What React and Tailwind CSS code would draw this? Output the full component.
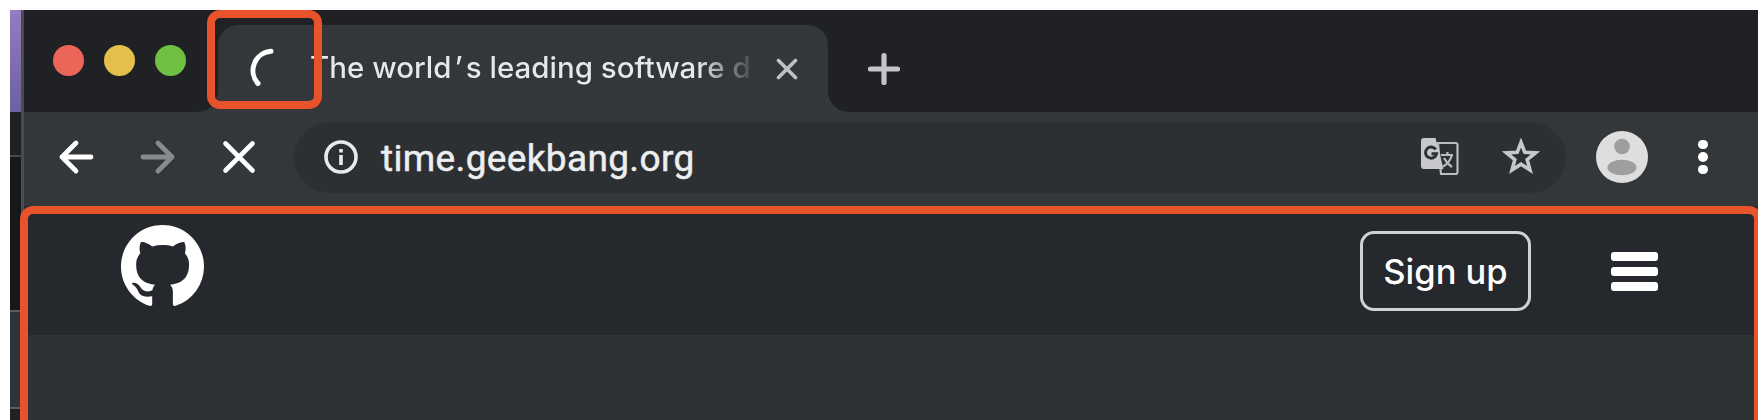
const OCTOCAT =
  "M8 0C3.58 0 0 3.58 0 8c0 3.54 2.29 6.53 5.47 7.59.4.07.55-.17.55-.38 0-.19-.01-.82-.01-1.49-2.01.37-2.53-.49-2.69-.94-.09-.23-.48-.94-.82-1.13-.28-.15-.68-.52-.01-.53.63-.01 1.08.58 1.23.82.72 1.21 1.87.87 2.33.66.07-.52.28-.87.51-1.07-1.78-.2-3.64-.89-3.64-3.95 0-.87.31-1.59.82-2.15-.08-.2-.36-1.02.08-2.12 0 0 .67-.21 2.2.82.64-.18 1.32-.27 2-.27.68 0 1.36.09 2 .27 1.53-1.04 2.2-.82 2.2-.82.44 1.1.16 1.92.08 2.12.51.56.82 1.27.82 2.15 0 3.07-1.87 3.75-3.65 3.95.29.25.54.73.54 1.48 0 1.07-.01 1.93-.01 2.2 0 .21.15.46.55.38A8.013 8.013 0 0016 8c0-4.42-3.58-8-8-8z";

function Icon({ className, box, width = 4, children }) {
  return (
    <svg
      className={className}
      viewBox={box}
      fill="none"
      stroke="currentColor"
      strokeWidth={width}
      strokeLinecap="round"
      strokeLinejoin="round"
    >
      {children}
    </svg>
  );
}

function DesktopEdge() {
  return (
    <div className="flex w-[11px] shrink-0 flex-col">
      <div className="h-[102px] bg-linear-to-b from-[#957bc1] to-[#6c61a0]" />
      <div className="h-[45px] border-b-2 border-[#4a4a4c] bg-[#1f2022]" />
      <div className="h-[155px] border-b-2 border-[#5b5e60] bg-[#171818]" />
      <div className="h-[97px] border-b-2 border-[#5b5e60] bg-[#2d3336]" />
      <div className="flex-1 bg-[#202124]" />
    </div>
  );
}

function TabStrip() {
  return (
    <div className="flex h-[102px] shrink-0 items-start bg-[#202124]">
      <div className="flex gap-5 pt-[35px] pl-[32px]">
        <div className="size-[31px] rounded-full bg-[#ec6559]" />
        <div className="size-[31px] rounded-full bg-[#e2c04b]" />
        <div className="size-[31px] rounded-full bg-[#6fc043]" />
      </div>
      <div className="mt-[82px] ml-[12px] size-5 bg-[radial-gradient(circle_at_0_0,#202124_19.5px,#33373a_20px)]" />
      <div className="mt-[15px] flex h-[87px] w-[610px] rounded-t-[20px] bg-[#33373a]">
        <Icon className="mt-[20px] ml-[25px] h-12 w-12 shrink-0 text-white" box="0 0 48 48" width={5}>
          <path d="M28 6.300A19.300 19.300 0 0 0 15 38.500" />
        </Icon>
        <div className="mt-[22px] ml-[19px] w-[450px] overflow-hidden font-[Inter,sans-serif] text-[29.5px] leading-[40px] font-medium whitespace-nowrap">
          <span className="inline-block bg-linear-to-r from-[#e6e8ea] from-88% to-[#4a4e52] bg-clip-text text-transparent">
            The world<span className="px-[3px]">’</span>s leading software d
          </span>
        </div>
        <Icon className="mt-[33px] ml-[16px] size-[22px] shrink-0 text-[#bfc1c3]" box="0 0 22 22" width={3.6}>
          <path d="M2.500 2.500 19.500 19.500M19.500 2.500 2.500 19.500" />
        </Icon>
      </div>
      <div className="mt-[82px] size-5 bg-[radial-gradient(circle_at_100%_0,#202124_19.5px,#33373a_20px)]" />
      <Icon className="mt-[42px] ml-[19px] size-[34px] text-[#c4c5c8]" box="0 0 34 34" width={5.2}>
        <path d="M17 3.500V30.500M3.500 17H30.500" />
      </Icon>
    </div>
  );
}

function Toolbar() {
  return (
    <div className="flex h-[94px] shrink-0 items-center bg-[#33373a] pb-1">
      <Icon className="ml-[37px] h-9 w-9 text-white" box="0 0 36 36" width={4.8}>
        <path d="M33 18H4M18 4 4 18 18 32" />
      </Icon>
      <Icon className="ml-[46px] h-9 w-9 text-[#888b8e]" box="0 0 36 36" width={4.8}>
        <path d="M3 18H32M18 4 32 18 18 32" />
      </Icon>
      <Icon className="ml-[45px] h-9 w-9 text-white" box="0 0 36 36" width={4.6}>
        <path d="M4.500 4.500 31.500 31.500M31.500 4.500 4.500 31.500" />
      </Icon>
      <div className="ml-[37px] flex h-[71px] w-[1272px] items-center rounded-full bg-[#2c3033]">
        <Icon className="ml-[29px] h-9 w-9 text-[#e8eaec]" box="0 0 36 36" width={3.6}>
          <circle cx="18" cy="18" r="15" />
          <path strokeLinecap="butt" d="M18 16V26M18 10V13.500" />
        </Icon>
        <span className="mt-0.5 ml-[22px] font-[Roboto,sans-serif] text-[37px] leading-none tracking-[0.35px] text-[#eceef0] [-webkit-text-stroke:0.5px_#eceef0]">
          time.geekbang.org
        </span>
        <svg className="ml-auto h-[38px] w-[38px]" viewBox="0 0 38 38">
          <path d="M17 5H34.500a2 2 0 0 1 2 2V34a2 2 0 0 1-2 2H20Z" fill="#2c3033" stroke="#b9bbbe" strokeWidth="2.200" />
          <path d="M3 0H14.500L22.500 31H3a3 3 0 0 1-3-3V3a3 3 0 0 1 3-3Z" fill="#c6c8cc" />
          <path d="M14.800 11.500a5.600 5.600 0 1 0 .8 4.200H10.500" fill="none" stroke="#2c3033" strokeWidth="2.900" />
          <path d="M20 17H32M26.500 14V17M31 17C29 23 26 27 21 29M23 20C25 24 28 27 31 29" fill="none" stroke="#b9bbbe" strokeWidth="2.200" />
        </svg>
        <Icon className="mr-[26px] ml-[43px] h-[38px] w-[38px] text-[#c6c8ca]" box="0 0 38 38" width={3.6}>
          <path
            strokeLinejoin="miter"
            d="M19 4.500 22.800 14.300 33.500 14.900 25.200 21.600 28 32 19 26.200 10 32 12.800 21.600 4.500 14.900 15.200 14.300Z"
          />
        </Icon>
      </div>
      <svg className="ml-[30px] h-[52px] w-[52px]" viewBox="0 0 52 52">
        <circle cx="26" cy="26" r="26" fill="#dedede" />
        <circle cx="26" cy="15.500" r="7.800" fill="#9e9e9e" />
        <ellipse cx="26" cy="36.500" rx="14.500" ry="7.800" fill="#9e9e9e" />
      </svg>
      <div className="ml-[50px] flex flex-col gap-[3px]">
        <div className="size-[9.5px] rounded-full bg-white" />
        <div className="size-[9.5px] rounded-full bg-white" />
        <div className="size-[9.5px] rounded-full bg-white" />
      </div>
    </div>
  );
}

function SiteHeader() {
  return (
    <div className="flex h-[129px] shrink-0 items-center bg-[#25282d]">
      <svg className="mb-[8px] ml-[100px] size-[83px]" viewBox="0 0 16 16" fill="#fff">
        <path d={OCTOCAT} />
      </svg>
      <button className="mr-[80px] ml-auto flex h-[80px] w-[171px] items-center justify-center rounded-[14px] border-[3px] border-[#cfd1d3] pt-0.5 font-[Inter,sans-serif] text-[34.5px] font-medium text-white">
        Sign up
      </button>
      <div className="mt-0.5 mr-[100px] flex w-[47px] flex-col gap-[6px]">
        <div className="h-[9px] rounded-[3px] bg-white" />
        <div className="h-[9px] rounded-[3px] bg-white" />
        <div className="h-[9px] rounded-[3px] bg-white" />
      </div>
    </div>
  );
}

export default function App() {
  return (
    <div className="h-[420px] w-[1764px] overflow-hidden bg-white pt-[10px] pl-[10px]">
      <div className="relative flex h-[410px] w-[1748px] overflow-hidden bg-[#171818]">
        <DesktopEdge />
        <div className="flex flex-1 flex-col overflow-hidden bg-[#2d3235]">
          <TabStrip />
          <Toolbar />
          <SiteHeader />
        </div>
        <div className="absolute top-0 left-[11px] h-full w-[3px] bg-[#494b4e]" />
        <div className="absolute top-0 left-[197px] h-[99px] w-[115px] rounded-[13px] border-8 border-[#e9532b]" />
        <div className="absolute top-[196px] left-[10px] h-[300px] w-[1742px] rounded-[13px] border-8 border-[#e9532b]" />
      </div>
    </div>
  );
}
